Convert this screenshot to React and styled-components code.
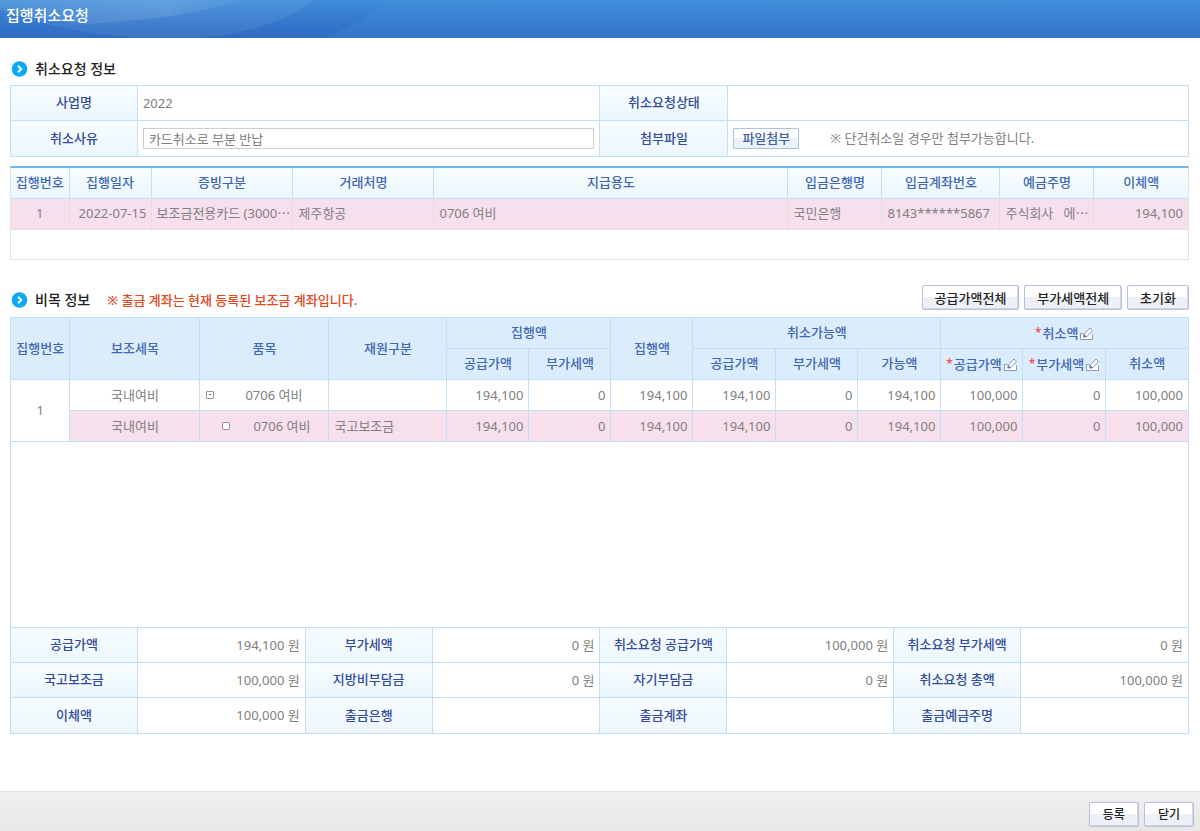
import { useState } from "react";
import styled, { createGlobalStyle, css } from "styled-components";

const GlobalStyle = createGlobalStyle`
    * {
        box-sizing: border-box;
    }

    body {
        margin: 0;
        background: #fff;
        color: #808080;
        font-family: "Noto Sans", "Noto Sans CJK KR", sans-serif;
        font-size: 13px;
        line-height: 18px;
    }

    button, input {
        font-family: inherit;
        font-size: inherit;
        line-height: inherit;
    }
`

const Page = styled.div`
    min-height: 100vh;
    display: flex;
    flex-direction: column;
`

const Header = styled.header`
    position: relative;
    height: 38px;
    padding: 0 6px;
    display: flex;
    align-items: center;
    overflow: hidden;
    background: linear-gradient(#408eda, #3272c8);

    svg {
        position: absolute;
        top: 0;
        left: 0;
    }

    h1 {
        position: relative;
        margin: 0 0 8px 0;
        color: #fff;
        font-size: 15px;
        font-weight: 500;
        line-height: 20px;
    }
`

const Main = styled.main`
    flex: 1;
    padding: 20px 11px 20px 10px;
`

const SectionHead = styled.div`
    height: ${({ $tall }) => $tall ? "32px" : "27px"};
    margin-top: ${({ $tall }) => $tall ? "25px" : "0"};
    display: flex;
    align-items: flex-start;

    svg {
        margin: ${({ $tall }) => $tall ? "7px 7px 0 1px" : "3px 7px 0 1px"};
    }

    h2 {
        margin: ${({ $tall }) => $tall ? "5px 0 0 0" : "1px 0 0 0"};
        color: #222;
        font-size: 14px;
        font-weight: 500;
        line-height: 20px;
    }

    p {
        margin: 6px 0 0 17px;
        color: #e0481c;
        font-weight: 500;
    }
`

const ButtonGroup = styled.div`
    margin-left: auto;
    display: flex;
    gap: 5px;
`

const Button = styled.button`
    height: 25px;
    padding: 0 ${({ $small }) => $small ? "13px" : "12px"};
    background: linear-gradient(#fff 50%, #eef0f7 50%);
    border: 1px solid #b7bddb;
    border-radius: 2px;
    box-shadow: inset -1px -1px 0 #d3d7e8;
    color: #222;
    font-size: ${({ $small }) => $small ? "12px" : "13px"};
    font-weight: 500;
    white-space: nowrap;
`

const FileButton = styled.button`
    height: 21px;
    padding: 0 8px;
    background: linear-gradient(#fff 50%, #eaf3fc 50%);
    border: 1px solid #a9c1e2;
    border-radius: 1px;
    color: #3f5fa5;
    font-weight: 500;
    line-height: 18px;
`

const Table = styled.table`
    width: 100%;
    table-layout: fixed;
    border-collapse: collapse;

    th, td {
        padding: 0 5px;
        border: 1px solid #c3def8;
        white-space: nowrap;
    }

    th {
        color: #4267b3;
        font-weight: 500;
    }

    td {
        text-align: left;
    }
`

const FormTable = styled(Table)`
    tr {
        height: 35px;
    }

    tr:last-child {
        height: 36px;
    }

    th {
        padding: 0 0 2px 0;
        background: linear-gradient(#f7fdff, #ebf6fe);
        color: #354a9c;
    }

    td {
        padding-bottom: 1px;
    }
`

const ListBox = styled.div`
    height: 94px;
    margin-top: 9px;
    border: 1px solid #e2e2e2;
    border-top: 2px solid #6fb7f0;
`

const ListTable = styled(Table)`
    tr {
        height: 31px;
    }

    thead tr {
        height: 30px;
    }

    th {
        padding: 0 0 1px 0;
        border-top: 0;
        background: linear-gradient(#f7fdff, #ebf6fe);
    }

    th:first-child, td:first-child {
        border-left: 0;
    }

    th:last-child, td:last-child {
        border-right: 0;
    }

    td {
        padding: 0 5px 2px 5px;
        border-color: #e0dfe3;
    }

    td:not(:last-child) {
        padding-right: 0;
    }

    td:first-child {
        padding-left: 0;
    }
`

const DetailBox = styled.div`
    height: 310px;
    border: 1px solid #c3def8;
    border-top: 0;
    border-bottom: 0;
`

const DetailTable = styled(Table)`
    tr {
        height: 31px;
    }

    th {
        padding: 0 0 2px 0;
        background: #dbedfd;
    }

    td {
        padding-bottom: 1px;
    }

    tr > :first-child[rowspan] {
        border-left: 0;
    }

    tr > :last-child {
        border-right: 0;
    }
`

const Row = styled.tr`
    ${({ $active }) => $active && css`
        td {
            background: #f8dfec;
        }
    `}
`

const Cell = styled.td`
    && {
        text-align: ${({ $align }) => $align || "left"};
    }
`

const ItemCell = styled.div`
    display: flex;
    align-items: center;
    justify-content: flex-end;
    padding-right: ${({ $child }) => $child ? "13px" : "21px"};

    button, input {
        width: 8px;
        height: 8px;
        margin: 0 ${({ $child }) => $child ? "23px" : "31px"} 0 0;
        padding: 0;
        appearance: none;
        background: #fff;
        border: 1px solid #9a9496;
        border-radius: 1px;
    }

    button {
        display: flex;
        align-items: center;
        justify-content: center;
    }

    button::before {
        content: "";
        width: 2px;
        height: 1px;
        background: #777;
    }

    input:checked {
        background: #4267b3;
    }
`

const Required = styled.span`
    margin-right: 1px;
    color: #f0483c;
    font-size: 12px;
`

const HeadLabel = styled.span`
    display: inline-flex;
    align-items: center;

    svg {
        margin: 2px 0 0 1px;
    }
`

const ReasonInput = styled.input`
    display: block;
    width: 100%;
    height: 21px;
    padding: 0 5px;
    border: 1px solid #cfcfcf;
    border-radius: 0;
    color: #808080;
`

const Attach = styled.div`
    display: flex;
    align-items: center;
    gap: 31px;
`

const Footer = styled.footer`
    height: 40px;
    padding: 0 6px 0 0;
    display: flex;
    align-items: center;
    background: linear-gradient(#f0f0f0, #e7e7e7);
    border-top: 1px solid #e2e2e2;

    ${ButtonGroup} {
        margin-top: 6px;
    }
`

const payments = [
    { id: 1, date: "2022-07-15", proof: "보조금전용카드 (3000⋯", vendor: "제주항공", purpose: "0706 여비", bank: "국민은행", account: "8143******5867", owner: "주식회사\u00a0\u00a0\u00a0에⋯", amount: "194,100" },
];

const details = [
    { id: "parent", name: "0706 여비", source: "", child: false },
    { id: "child", name: "0706 여비", source: "국고보조금", child: true },
];

const amounts = ["194,100", "0", "194,100", "194,100", "0", "194,100", "100,000", "0", "100,000"];

const summary = [
    [["공급가액", "194,100 원"], ["부가세액", "0 원"], ["취소요청 공급가액", "100,000 원"], ["취소요청 부가세액", "0 원"]],
    [["국고보조금", "100,000 원"], ["지방비부담금", "0 원"], ["자기부담금", "0 원"], ["취소요청 총액", "100,000 원"]],
    [["이체액", "100,000 원"], ["출금은행", ""], ["출금계좌", ""], ["출금예금주명", ""]],
];

function Cols({ widths }){
    const total = widths.reduce((sum, w) => sum + w, 0);

    return <colgroup>
        {widths.map((w, i) => <col key={i} style={{ width: `${w / total * 100}%` }}/>)}
    </colgroup>
}

function ArrowIcon(){
    return <svg width="17" height="16" viewBox="0 0 17 16" aria-hidden="true">
        <circle cx="8.5" cy="8" r="7.8" fill="#08aaf5"/>
        <path d="M7 4.8 L10.2 8 L7 11.2" fill="none" stroke="#fff" strokeWidth="2"/>
    </svg>
}

function EditIcon(){
    return <svg width="15" height="13" viewBox="0 0 15 13" aria-hidden="true">
        <path d="M4.5 6.5 H1.5 V12.5 H13.5 V7.5" fill="#fff" stroke="#8f95bb"/>
        <path d="M5 10 L5.5 6.8 L11 1 L13.6 3.5 L8.2 9.4 Z" fill="#fff" stroke="#8f95bb"/>
        <path d="M4.4 10.6 L4.8 6.8 L8 10 Z" fill="#6a71a5"/>
    </svg>
}

function EditLabel({ children }){
    return <HeadLabel><Required>*</Required>{children}<EditIcon/></HeadLabel>
}

function App(){
    const [reason, setReason] = useState("카드취소로 부분 반납");
    const [checked, setChecked] = useState(false);

    return <Page>
        <GlobalStyle/>
        <Header>
            <svg width="400" height="38" viewBox="0 0 400 38" aria-hidden="true">
                <defs>
                    <linearGradient id="glow" x1="0" y1="0" x2="1" y2="0">
                        <stop offset="0" stopColor="#fff" stopOpacity="0.04"/>
                        <stop offset="0.7" stopColor="#fff" stopOpacity="0.12"/>
                        <stop offset="1" stopColor="#fff" stopOpacity="0.04"/>
                    </linearGradient>
                    <linearGradient id="shade" x1="0" y1="0" x2="0" y2="1">
                        <stop offset="0" stopColor="#2459b8" stopOpacity="0"/>
                        <stop offset="1" stopColor="#2459b8" stopOpacity="0.3"/>
                    </linearGradient>
                </defs>
                <path d="M0 0 H385 Q360 26 322 38 H0 Z" fill="url(#shade)"/>
                <path d="M0 0 H315 Q262 38 180 38 H140 Q60 32 0 10 Z" fill="#fff" opacity="0.07"/>
                <path d="M0 0 H240 Q190 18 85 24 Q35 18 0 6 Z" fill="url(#glow)"/>
            </svg>
            <h1>집행취소요청</h1>
        </Header>

        <Main>
            <SectionHead>
                <ArrowIcon/>
                <h2>취소요청 정보</h2>
            </SectionHead>
            <FormTable>
                <Cols widths={[127, 463, 128, 461]}/>
                <tbody>
                    <tr>
                        <th scope="row">사업명</th>
                        <td>2022</td>
                        <th scope="row">취소요청상태</th>
                        <td></td>
                    </tr>
                    <tr>
                        <th scope="row"><label htmlFor="reason">취소사유</label></th>
                        <td>
                            <ReasonInput id="reason" type="text" value={reason} onChange={e => setReason(e.target.value)}/>
                        </td>
                        <th scope="row">첨부파일</th>
                        <td>
                            <Attach>
                                <FileButton type="button">파일첨부</FileButton>
                                <span>※ 단건취소일 경우만 첨부가능합니다.</span>
                            </Attach>
                        </td>
                    </tr>
                </tbody>
            </FormTable>

            <ListBox>
                <ListTable>
                    <Cols widths={[58, 82, 142, 141, 354, 94, 118, 94, 94]}/>
                    <thead>
                        <tr>
                            {["집행번호", "집행일자", "증빙구분", "거래처명", "지급용도", "입금은행명", "입금계좌번호", "예금주명", "이체액"].map(title =>
                                <th key={title} scope="col">{title}</th>
                            )}
                        </tr>
                    </thead>
                    <tbody>
                        {payments.map(p => <Row key={p.id} $active>
                            <Cell $align="center">{p.id}</Cell>
                            <Cell $align="center">{p.date}</Cell>
                            <Cell>{p.proof}</Cell>
                            <Cell>{p.vendor}</Cell>
                            <Cell>{p.purpose}</Cell>
                            <Cell>{p.bank}</Cell>
                            <Cell>{p.account}</Cell>
                            <Cell>{p.owner}</Cell>
                            <Cell $align="right">{p.amount}</Cell>
                        </Row>)}
                    </tbody>
                </ListTable>
            </ListBox>

            <SectionHead $tall>
                <ArrowIcon/>
                <h2>비목 정보</h2>
                <p>※ 출금 계좌는 현재 등록된 보조금 계좌입니다.</p>
                <ButtonGroup>
                    <Button type="button">공급가액전체</Button>
                    <Button type="button">부가세액전체</Button>
                    <Button type="button">초기화</Button>
                </ButtonGroup>
            </SectionHead>
            <DetailBox>
                <DetailTable>
                    <Cols widths={[59, 130, 129, 118, 82, 82, 82, 83, 82, 83, 82, 83, 82]}/>
                    <thead>
                        <tr>
                            <th rowSpan="2">집행번호</th>
                            <th rowSpan="2">보조세목</th>
                            <th rowSpan="2">품목</th>
                            <th rowSpan="2">재원구분</th>
                            <th colSpan="2">집행액</th>
                            <th rowSpan="2">집행액</th>
                            <th colSpan="3">취소가능액</th>
                            <th colSpan="3"><EditLabel>취소액</EditLabel></th>
                        </tr>
                        <tr>
                            <th>공급가액</th>
                            <th>부가세액</th>
                            <th>공급가액</th>
                            <th>부가세액</th>
                            <th>가능액</th>
                            <th><EditLabel>공급가액</EditLabel></th>
                            <th><EditLabel>부가세액</EditLabel></th>
                            <th>취소액</th>
                        </tr>
                    </thead>
                    <tbody>
                        {details.map((d, i) => <Row key={d.id} $active={d.child}>
                            {i === 0 && <Cell rowSpan={details.length} $align="center">1</Cell>}
                            <Cell $align="center">국내여비</Cell>
                            <Cell>
                                <ItemCell $child={d.child}>
                                    {d.child
                                        ? <input type="checkbox" aria-label={d.name} checked={checked} onChange={e => setChecked(e.target.checked)}/>
                                        : <button type="button" aria-label="접기"/>}
                                    {d.name}
                                </ItemCell>
                            </Cell>
                            <Cell>{d.source}</Cell>
                            {amounts.map((amount, j) => <Cell key={j} $align="right">{amount}</Cell>)}
                        </Row>)}
                    </tbody>
                </DetailTable>
            </DetailBox>

            <FormTable>
                <Cols widths={[127, 168, 127, 168, 127, 167, 127, 168]}/>
                <tbody>
                    {summary.map((row, i) => <tr key={i}>
                        {row.map(([label, value]) => [
                            <th key={label} scope="row">{label}</th>,
                            <Cell key={`${label}-value`} $align="right">{value}</Cell>
                        ])}
                    </tr>)}
                </tbody>
            </FormTable>
        </Main>

        <Footer>
            <ButtonGroup>
                <Button type="button" $small>등록</Button>
                <Button type="button" $small>닫기</Button>
            </ButtonGroup>
        </Footer>
    </Page>
}

export default App;
